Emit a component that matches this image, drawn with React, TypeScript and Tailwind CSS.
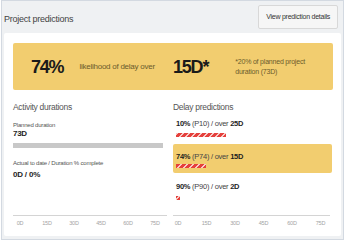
const stripes =
  'bg-[repeating-linear-gradient(-45deg,#e5403c_0px,#e5403c_2.8px,#f8cbc7_2.8px,#f8cbc7_4.2px)]';

function Axis({ width, pad, gap }: { width: string; pad: string; gap: string }) {
  const labels = ['0D', '15D', '30D', '45D', '60D', '75D'];
  return (
    <div className={`mt-auto ${width}`}>
      <div className="border-t border-[#d4d4d4]" />
      <div className={`mt-[3px] flex ${pad} ${gap} text-[5.5px] leading-[8px] tracking-[-0.2px] text-[#a3a3a3]`}>
        {labels.map((l) => (
          <span key={l} className="flex w-[10px] justify-center whitespace-nowrap">
            {l}
          </span>
        ))}
      </div>
    </div>
  );
}

function Prediction({ pct, p, over, bar }: { pct: string; p: string; over: string; bar: string }) {
  return (
    <>
      <p className="whitespace-nowrap text-[7.5px] leading-[10px] tracking-[-0.25px] text-[#444]">
        <b className="text-[#1e1e1e]">{pct}</b> ({p}) / over <b className="text-[#1e1e1e]">{over}</b>
      </p>
      <div className={`mt-[4px] h-[4px] ${bar} ${stripes}`} />
    </>
  );
}

export default function App() {
  return (
    <div className="h-[242px] w-[346px] bg-white pl-[1px] font-['Liberation_Sans',Arial,sans-serif]">
      <div className="flex h-[240px] w-[343px] flex-col border border-[#d3d9e1] bg-[#eff1f3] px-[2px]">
        <div className="flex h-[32px] items-start justify-between">
          <h1 className="mt-[12px] text-[9px] leading-[12px] tracking-[-0.25px] text-[#444]">Project predictions</h1>
          <button className="mr-[3px] mt-[4px] h-[24px] rounded-[2px] border border-[#d8d8d8] bg-[#f6f6f6] px-[7px] text-[7px] tracking-[-0.25px] text-[#333]">
            View prediction details
          </button>
        </div>

        <div className="flex h-[203px] flex-col rounded-[2px] bg-white pb-[9px] pl-[9px] pr-[8px] pt-[10px]">
          <div className="grid h-[47px] shrink-0 grid-cols-[154px_159px] items-center gap-x-[6px] rounded-[2px] bg-[#f2cd6f]">
            <div className="flex items-center pl-[18px]">
              <span className="text-[18px] font-bold leading-none tracking-[-1.2px] text-[#1a1a1a]">74%</span>
              <span className="ml-[16px] whitespace-nowrap text-[8px] tracking-[-0.25px] text-[#6b5b2c]">
                likelihood of delay over
              </span>
            </div>
            <div className="flex items-center">
              <span className="text-[18px] font-bold leading-none tracking-[-1.2px] text-[#1a1a1a]">15D*</span>
              <span className="ml-[27px] text-[7px] leading-[9.5px] tracking-[-0.2px] text-[#6b5b2c]">
                *20% of planned project
                <br />
                duration (73D)
              </span>
            </div>
          </div>

          <div className="mt-[11px] grid flex-1 grid-cols-[154px_159px] gap-x-[6px]">
            <div className="flex flex-col">
              <h2 className="text-[8.5px] leading-[12px] tracking-[-0.3px] text-[#555]">Activity durations</h2>
              <p className="mt-[8px] text-[6px] leading-[8px] tracking-[-0.2px] text-[#555]">Planned duration</p>
              <p className="text-[8px] font-bold leading-[10px] tracking-[-0.3px] text-[#1e1e1e]">73D</p>
              <div className="mt-[4px] h-[5px] w-[150px] bg-[#c8c8c8]" />
              <p className="mt-[11px] text-[6px] leading-[8px] tracking-[-0.2px] text-[#555]">
                Actual to date / Duration % complete
              </p>
              <p className="mt-[3px] text-[8px] font-bold leading-[10px] tracking-[-0.2px] text-[#1e1e1e]">0D / 0%</p>
              <Axis width="w-[154px]" pad="pl-[2px]" gap="gap-[17px]" />
            </div>

            <div className="flex flex-col">
              <h2 className="text-[8.5px] leading-[12px] tracking-[-0.3px] text-[#555]">Delay predictions</h2>
              <div className="mt-[6px] pl-[3px]">
                <Prediction pct="10%" p="P10" over="25D" bar="w-[50px]" />
              </div>
              <div className="mt-[7px] rounded-[2px] bg-[#f2cd6f] pb-[5px] pl-[3px] pt-[7.5px]">
                <p className="whitespace-nowrap text-[7.5px] leading-[10px] tracking-[-0.25px] text-[#444]">
                  <b className="text-[#1e1e1e]">74%</b> (P74) / over <b className="text-[#1e1e1e]">15D</b>
                </p>
                <div className={`mt-[2.5px] h-[4px] w-[30px] ${stripes}`} />
              </div>
              <div className="mt-[8.5px] pl-[3px]">
                <Prediction pct="90%" p="P90" over="2D" bar="w-[4px]" />
              </div>
              <Axis width="w-[157px]" pad="pl-0" gap="gap-[18.5px]" />
            </div>
          </div>
        </div>
      </div>
    </div>
  );
}
